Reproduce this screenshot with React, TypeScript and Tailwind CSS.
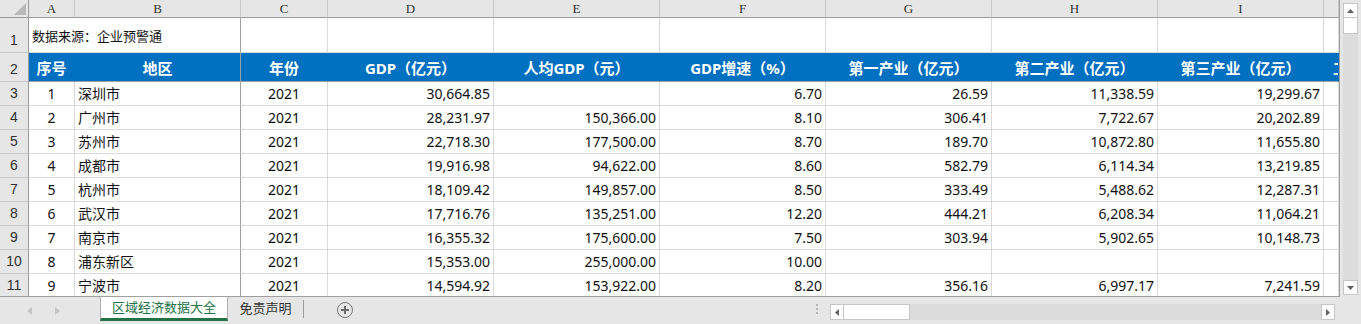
import React from "react";

const FONT = { fontFamily: '"Noto Sans", "Noto Sans CJK SC", sans-serif' };

const colW = [
  "w-[46px] min-w-[46px]",
  "w-[166px] min-w-[166px]",
  "w-[87px] min-w-[87px]",
  "w-[166px] min-w-[166px]",
  "w-[166px] min-w-[166px]",
  "w-[166px] min-w-[166px]",
  "w-[166px] min-w-[166px]",
  "w-[166px] min-w-[166px]",
  "w-[166px] min-w-[166px]",
  "w-[15px] min-w-[15px]",
];

const letters = ["A", "B", "C", "D", "E", "F", "G", "H", "I", ""];

const heads = [
  "序号",
  "地区",
  "年份",
  "GDP（亿元）",
  "人均GDP（元）",
  "GDP增速（%）",
  "第一产业（亿元）",
  "第二产业（亿元）",
  "第三产业（亿元）",
];

const rows = [
  ["1", "深圳市", "2021", "30,664.85", "", "6.70", "26.59", "11,338.59", "19,299.67"],
  ["2", "广州市", "2021", "28,231.97", "150,366.00", "8.10", "306.41", "7,722.67", "20,202.89"],
  ["3", "苏州市", "2021", "22,718.30", "177,500.00", "8.70", "189.70", "10,872.80", "11,655.80"],
  ["4", "成都市", "2021", "19,916.98", "94,622.00", "8.60", "582.79", "6,114.34", "13,219.85"],
  ["5", "杭州市", "2021", "18,109.42", "149,857.00", "8.50", "333.49", "5,488.62", "12,287.31"],
  ["6", "武汉市", "2021", "17,716.76", "135,251.00", "12.20", "444.21", "6,208.34", "11,064.21"],
  ["7", "南京市", "2021", "16,355.32", "175,600.00", "7.50", "303.94", "5,902.65", "10,148.73"],
  ["8", "浦东新区", "2021", "15,353.00", "255,000.00", "10.00", "", "", ""],
  ["9", "宁波市", "2021", "14,594.92", "153,922.00", "8.20", "356.16", "6,997.17", "7,241.59"],
];

function RowHead({ n, h }: { n: string; h: string }) {
  return (
    <div
      className={`w-[29px] min-w-[29px] ${h} flex items-end justify-center pb-[1px] bg-[#e6e6e6] border-r border-b border-r-[#9b9b9b] border-b-[#c6c6c6] text-[14px] text-[#333]`}
      style={{ fontFamily: '"Liberation Sans", sans-serif' }}
    >
      {n}
    </div>
  );
}

function DataRow({ r, num }: { r: string[]; num: number }) {
  return (
    <div className="flex h-[24px] min-h-[24px]">
      <RowHead n={String(num)} h="h-[24px]" />
      {colW.map((w, i) => {
        const v = r[i] ?? "";
        const align =
          i === 0 || i === 2 ? "justify-center" : i === 1 ? "justify-start pl-[3px]" : "justify-end pr-[3px]";
        const br = i === 1 ? "border-r-[#a0a0a0]" : "border-r-[#d9d9d9]";
        return (
          <div
            key={i}
            className={`${w} h-[24px] flex items-end pb-[1px] ${align} border-r border-b ${br} border-b-[#d9d9d9] text-[14px] text-[#111] whitespace-nowrap overflow-hidden`}
            style={FONT}
          >
            {v}
          </div>
        );
      })}
    </div>
  );
}

function Grid() {
  return (
    <div className="w-[1340px] min-w-[1340px] h-[297px] overflow-hidden border-r border-b border-[#9f9f9f] bg-white">
      {/* column letters */}
      <div className="flex h-[18px]">
        <div className="w-[29px] min-w-[29px] h-[18px] bg-[#e6e6e6] border-r border-b border-[#9b9b9b] relative">
          <svg width="12" height="12" className="absolute right-[2px] bottom-[2px]">
            <polygon points="12,0 12,12 0,12" fill="#b9b9b9" />
          </svg>
        </div>
        {colW.map((w, i) => (
          <div
            key={i}
            className={`${w} h-[18px] flex items-center justify-center bg-[#e6e6e6] border-r border-b border-r-[#c6c6c6] border-b-[#9b9b9b] text-[13px] text-[#333]`}
            style={{ fontFamily: '"Liberation Serif", serif' }}
          >
            {letters[i]}
          </div>
        ))}
      </div>
      {/* row 1 */}
      <div className="flex h-[35px]">
        <RowHead n="1" h="h-[35px]" />
        <div
          className="w-[212px] min-w-[212px] h-[35px] flex items-center pt-[3px] pl-[3px] border-r border-b border-r-[#a0a0a0] border-b-[#d9d9d9] text-[13px] text-[#111] whitespace-nowrap"
          style={FONT}
        >
          数据来源：企业预警通
        </div>
        {colW.slice(2).map((w, i) => (
          <div key={i} className={`${w} h-[35px] border-r border-b border-[#d9d9d9]`} />
        ))}
      </div>
      {/* row 2 header */}
      <div className="flex h-[29px]">
        <RowHead n="2" h="h-[29px]" />
        {colW.map((w, i) => (
          <div
            key={i}
            className={`${w} h-[29px] flex items-end pb-[2px] justify-center bg-[#0070c0] border-r border-b ${
              i === 1 ? "border-r-[#a0a0a0]" : "border-r-[#0070c0]"
            } border-b-[#a0a0a0] text-[15px] font-bold text-white whitespace-nowrap overflow-hidden`}
            style={FONT}
          >
            {i === 9 ? <span className="w-full pl-[9px]">工</span> : heads[i]}
          </div>
        ))}
      </div>
      {rows.map((r, i) => (
        <DataRow key={i} r={r} num={i + 3} />
      ))}
    </div>
  );
}

function VScroll() {
  return (
    <div className="w-[21px] min-w-[21px] h-[297px] bg-[#e6e6e6] pt-[3px] pl-[3px]">
      <div className="w-[15px] h-[292px] bg-[#dcdcdc] flex flex-col justify-between">
        <div>
          <div className="w-[15px] h-[15px] bg-white border border-[#c6c6c6] flex items-center justify-center">
            <svg width="7" height="4">
              <polygon points="0,4 7,4 3.5,0" fill="#606060" />
            </svg>
          </div>
          <div className="w-[15px] h-[16px] bg-white border border-t-0 border-[#c6c6c6]" />
        </div>
        <div className="w-[15px] h-[15px] bg-white border border-[#c6c6c6] flex items-center justify-center">
          <svg width="7" height="4">
            <polygon points="0,0 7,0 3.5,4" fill="#606060" />
          </svg>
        </div>
      </div>
    </div>
  );
}

function TabBar() {
  return (
    <div className="flex h-[27px] bg-[#e6e6e6] text-[13px]" style={FONT}>
      <div className="w-[100px] min-w-[100px] flex items-center">
        <svg width="5" height="8" className="ml-[27px]">
          <polygon points="5,0 5,8 0,4" fill="#c4c4c4" />
        </svg>
        <svg width="5" height="8" className="ml-[23px]">
          <polygon points="0,0 0,8 5,4" fill="#c4c4c4" />
        </svg>
      </div>
      <div className="w-[128px] min-w-[128px] h-[24px] bg-white border-l border-r border-[#b0b0b0] border-b-[3px] border-b-[#217346] flex items-center justify-center text-[#217346]">
        区域经济数据大全
      </div>
      <div className="w-[75px] min-w-[75px] h-[24px] flex items-center justify-center text-[#333]">免责声明</div>
      <div className="w-px h-[18px] mt-[3px] bg-[#9a9a9a]" />
      <div className="ml-[33px] mt-[5px] w-[16px] h-[16px] rounded-full border border-[#7a7a7a] flex items-center justify-center">
        <svg width="8" height="8">
          <rect x="3" y="0" width="2" height="8" fill="#6a6a6a" />
          <rect x="0" y="3" width="8" height="2" fill="#6a6a6a" />
        </svg>
      </div>
      <div className="ml-[463px] mt-[7px] flex flex-col gap-[2px]">
        <div className="w-[2px] h-[2px] bg-[#b5b5b5]" />
        <div className="w-[2px] h-[2px] bg-[#b5b5b5]" />
        <div className="w-[2px] h-[2px] bg-[#b5b5b5]" />
      </div>
      <div className="ml-[12px] mt-[7px] flex h-[16px] w-[505px] bg-[#dcdcdc]">
        <div className="w-[14px] h-[16px] bg-white border border-[#c6c6c6] flex items-center justify-center">
          <svg width="4" height="7">
            <polygon points="4,0 4,7 0,3.5" fill="#606060" />
          </svg>
        </div>
        <div className="w-[66px] h-[16px] bg-white border border-l-0 border-[#c6c6c6]" />
        <div className="flex-1" />
        <div className="w-[14px] h-[16px] bg-white border border-[#c6c6c6] flex items-center justify-center">
          <svg width="4" height="7">
            <polygon points="0,0 0,7 4,3.5" fill="#606060" />
          </svg>
        </div>
      </div>
    </div>
  );
}

export default function App() {
  return (
    <div className="w-[1361px] h-[324px] overflow-hidden bg-[#e6e6e6]">
      <div className="flex">
        <Grid />
        <VScroll />
      </div>
      <TabBar />
    </div>
  );
}
